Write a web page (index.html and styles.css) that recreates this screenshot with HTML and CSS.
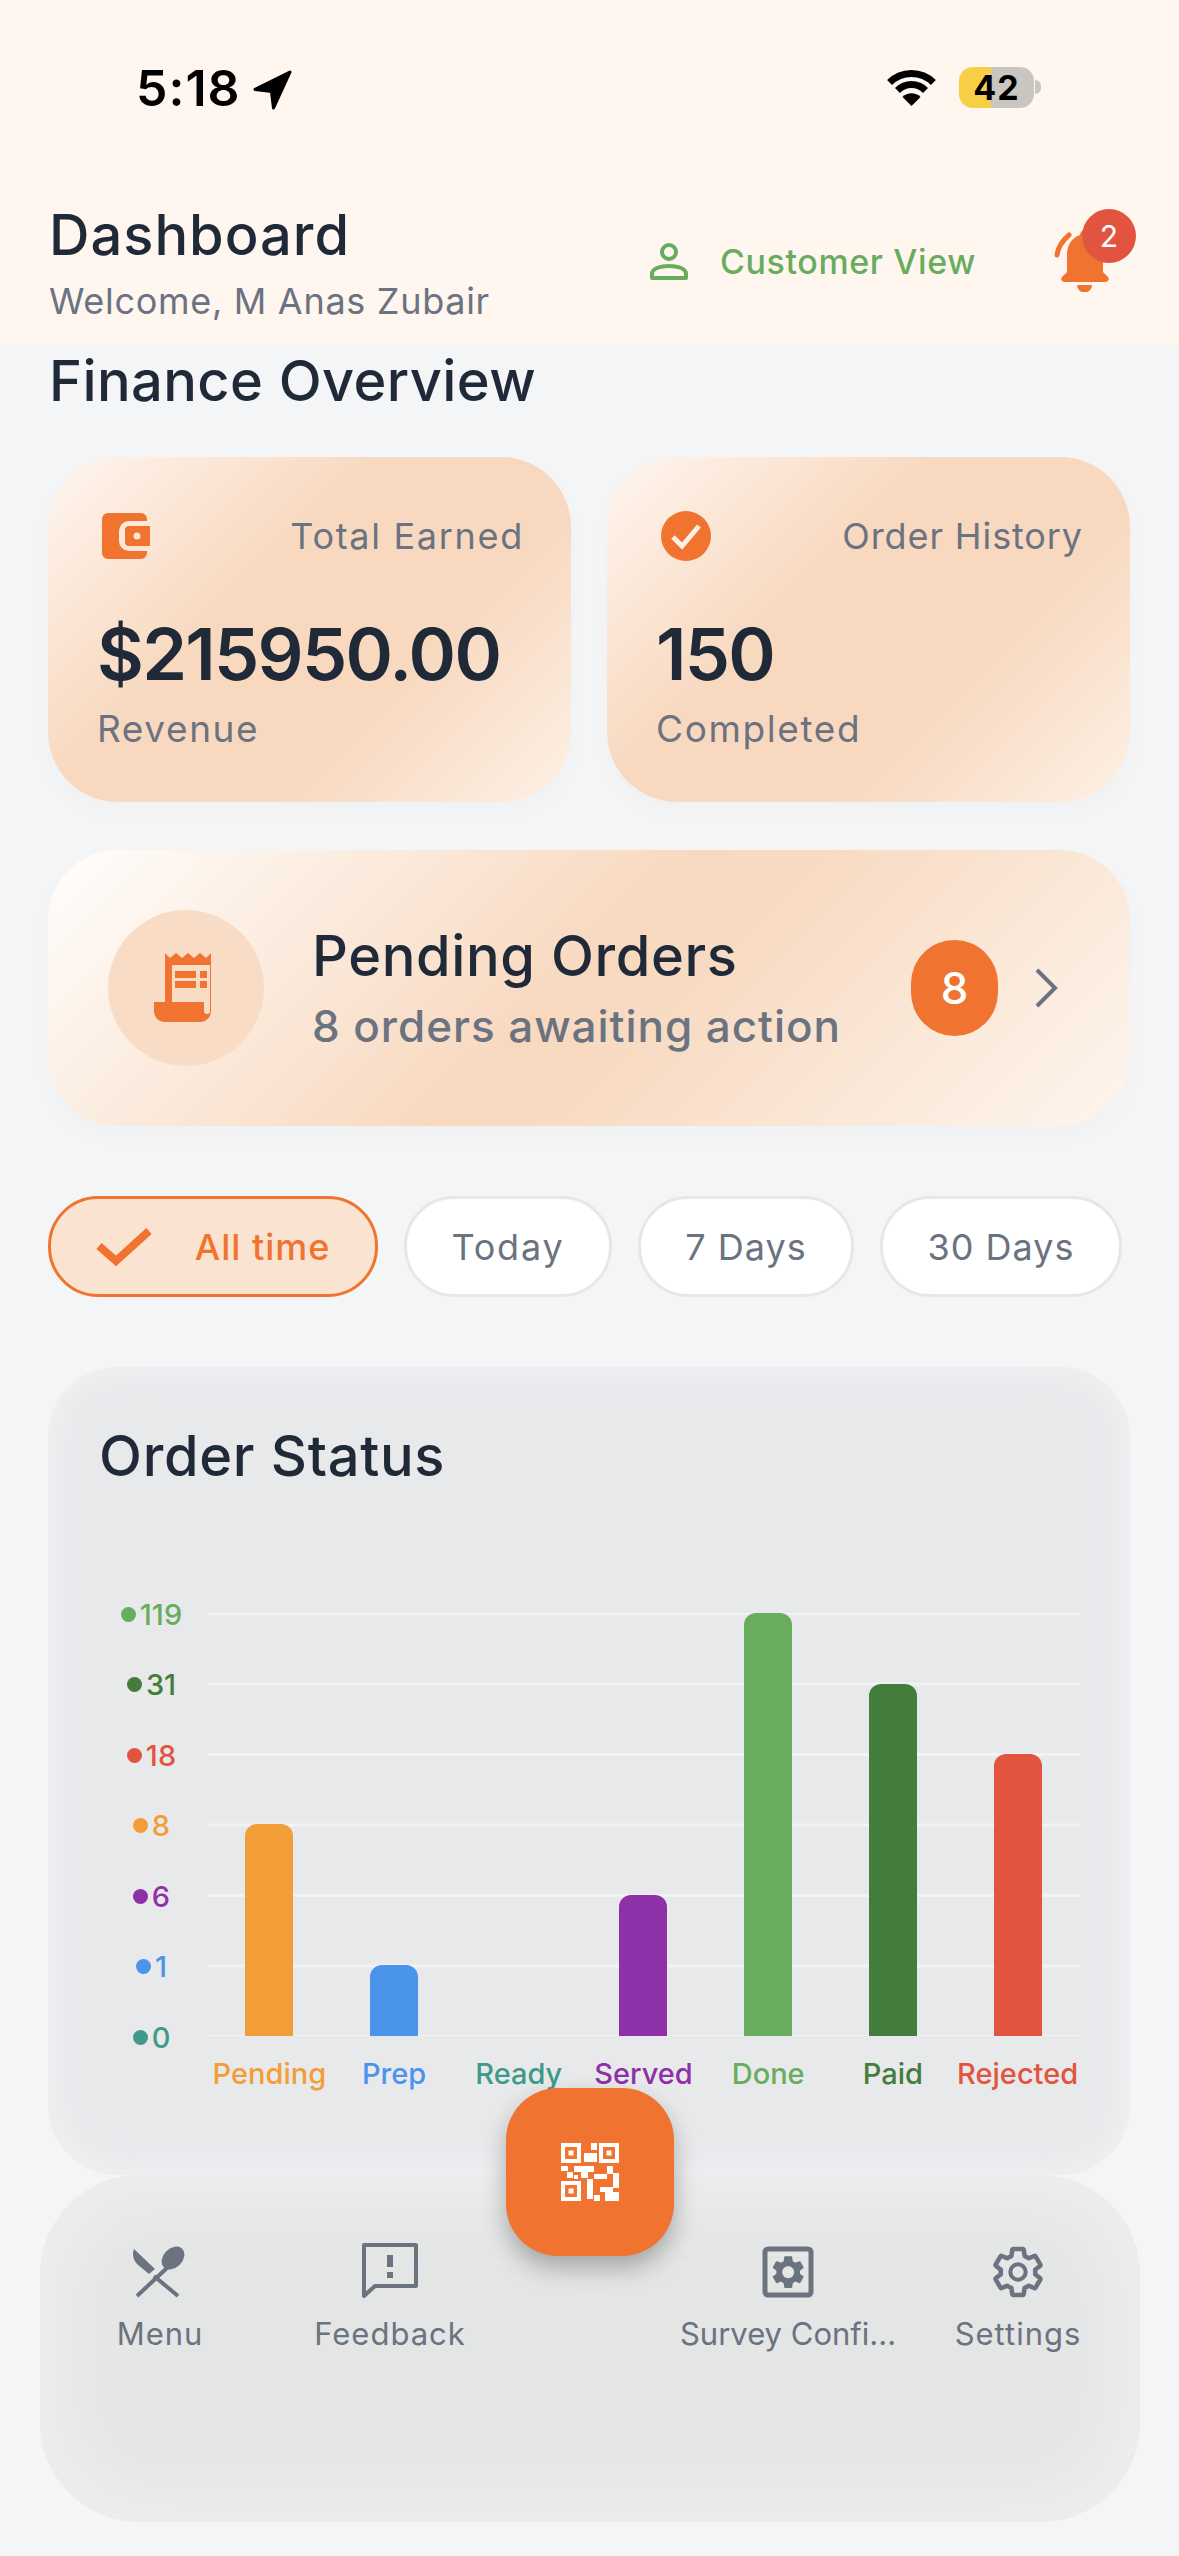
FILE: index.html
```html
<!DOCTYPE html>
<html lang="en">
<head>
  <meta charset="UTF-8">
  <meta name="viewport" content="width=device-width, initial-scale=1.0">
  <title>Dashboard</title>
  <link rel="stylesheet" href="styles.css">
</head>
<body>
  <!-- Top header with status bar -->
  <header class="top">
    <div class="status">
      <div class="status-left">
        <span class="time">5:18</span>
        <svg class="arrow" viewBox="0 0 40 40"><path d="M37 3 3 20l16 2 2 16z" fill="#000" stroke="#000" stroke-width="3" stroke-linejoin="round"/></svg>
      </div>
      <div class="status-right">
        <svg class="wifi" viewBox="0 0 51 37">
          <path d="M3.6 13.5a31 31 0 0 1 43.8 0M11.5 21.5a19.5 19.5 0 0 1 28 0" fill="none" stroke="#000" stroke-width="7"/>
          <path d="M25.5 37 16.5 28a12.7 12.7 0 0 1 18 0z"/>
        </svg>
        <div class="battery"><span class="battery-num">42</span></div>
        <span class="battery-nub"></span>
      </div>
    </div>
    <div class="head-row">
      <div class="head-titles">
        <h1>Dashboard</h1>
        <p>Welcome, M Anas Zubair</p>
      </div>
      <div class="customer">
        <svg class="person" viewBox="0 0 38 38"><circle cx="19" cy="9" r="7" fill="none" stroke="#68ad5d" stroke-width="4"/><path d="M2 35v-4c0-6 9-8 17-8s17 2 17 8v4z" fill="none" stroke="#68ad5d" stroke-width="4" stroke-linejoin="round"/></svg>
        <span>Customer View</span>
      </div>
      <div class="bell">
        <svg viewBox="0 0 60 64">
          <path d="M33 2a5 5 0 0 0-5 5C19 10 15 18 15 27v17l-5 5a3 3 0 0 0 2 5h42a3 3 0 0 0 2-5l-5-5V27C51 18 47 10 38 7a5 5 0 0 0-5-5z" fill="#f0742f"/>
          <path d="M25 57h15a7.500 7.500 0 0 1-15 0z" fill="#f0742f"/>
          <path d="M17 7C10 13 6 19 5 27" fill="none" stroke="#f0742f" stroke-width="5" stroke-linecap="round"/>
        </svg>
        <span class="bell-badge">2</span>
      </div>
    </div>
  </header>

  <main class="content">
    <h2 class="finance-title">Finance Overview</h2>

    <section class="stat-row">
      <div class="stat-card">
        <div class="stat-top">
          <svg class="stat-icon wallet" viewBox="0 0 48 46">
            <path d="M6 0h33a6 6 0 0 1 6 6v2H27a10 10 0 0 0-10 10v10a10 10 0 0 0 10 10h18v2a6 6 0 0 1-6 6H6a6 6 0 0 1-6-6V6a6 6 0 0 1 6-6z" fill="#f0742f"/>
            <path fill-rule="evenodd" d="M27 13h21v20H27a4 4 0 0 1-4-4V17a4 4 0 0 1 4-4zm8 6.500a3.500 3.500 0 1 0 0 7 3.500 3.500 0 0 0 0-7z" fill="#f0742f"/>
          </svg>
          <span>Total Earned</span>
        </div>
        <div class="stat-value">$215950.00</div>
        <div class="stat-note">Revenue</div>
      </div>
      <div class="stat-card">
        <div class="stat-top stat-top-tight">
          <svg class="stat-icon" viewBox="0 0 50 50">
            <circle cx="25" cy="25" r="25" fill="#f0742f"/>
            <path d="M12 26l9 9 17-20" fill="none" stroke="#fdeee3" stroke-width="5"/>
          </svg>
          <span>Order History</span>
        </div>
        <div class="stat-value">150</div>
        <div class="stat-note">Completed</div>
      </div>
    </section>

    <section class="pending">
      <div class="pending-circle">
        <svg viewBox="0 0 64 70">
          <path fill-rule="evenodd" fill="#f0742f" d="M11 0l5 5 6-5 6 5 6-5 6 5 6-5 6 5 5-5v58a11 11 0 0 1-11 11H11A11 11 0 0 1 0 58V49h11zM18 12v37h32v9a3 3 0 0 0 6 0V12z"/>
          <path fill="#f0742f" d="M21 18h21v7H21zM46 18h7v7h-7zM21 28h21v7H21zM46 28h7v7h-7z"/>
        </svg>
      </div>
      <div class="pending-text">
        <div class="pending-title">Pending Orders</div>
        <div class="pending-sub">8 orders awaiting action</div>
      </div>
      <div class="pending-badge">8</div>
      <svg class="chevron" viewBox="0 0 24 40"><path d="M3 2l18 18L3 38" fill="none" stroke="#6b7280" stroke-width="4"/></svg>
    </section>

    <section class="chips">
      <div class="chip chip-active">
        <svg viewBox="0 0 56 40"><path d="M3 19l17 15L53 4" fill="none" stroke="#f0742f" stroke-width="8"/></svg>
        <span>All time</span>
      </div>
      <div class="chip chip-today">Today</div>
      <div class="chip chip-seven">7 Days</div>
      <div class="chip chip-thirty">30 Days</div>
    </section>

    <section class="chart-card">
      <h2>Order Status</h2>
      <div class="chart">
        <div class="axis">
          <div class="tick c-done"><i></i>119</div>
          <div class="tick c-paid"><i></i>31</div>
          <div class="tick c-rejected"><i></i>18</div>
          <div class="tick c-pending"><i></i>8</div>
          <div class="tick c-served"><i></i>6</div>
          <div class="tick c-prep"><i></i>1</div>
          <div class="tick c-ready"><i></i>0</div>
        </div>
        <div class="plot-wrap">
          <div class="plot">
            <div class="bar c-pending" style="height: 212px"></div>
            <div class="bar c-prep" style="height: 71px"></div>
            <div class="bar c-ready" style="height: 0"></div>
            <div class="bar c-served" style="height: 141px"></div>
            <div class="bar c-done" style="height: 423px"></div>
            <div class="bar c-paid" style="height: 352px"></div>
            <div class="bar c-rejected" style="height: 282px"></div>
          </div>
          <div class="bar-labels">
            <span class="c-pending">Pending</span>
            <span class="c-prep">Prep</span>
            <span class="c-ready">Ready</span>
            <span class="c-served">Served</span>
            <span class="c-done">Done</span>
            <span class="c-paid">Paid</span>
            <span class="c-rejected">Rejected</span>
          </div>
        </div>
      </div>
    </section>

    <nav class="bottom-nav">
      <div class="nav-item">
        <svg viewBox="0 0 56 58">
          <path d="M2 6l21 20-6 5L5 21C1 17 0 10 2 6z" fill="#6b7280"/>
          <ellipse cx="41" cy="15" rx="13" ry="9.500" transform="rotate(-45 41 15)" fill="#6b7280"/>
          <path d="M36 24 5 53M22 33l24 20" fill="none" stroke="#6b7280" stroke-width="4"/>
        </svg>
        <span>Menu</span>
      </div>
      <div class="nav-item">
        <svg viewBox="0 0 56 58">
          <path d="M2 2h52v41H13L2 53z" fill="none" stroke="#6b7280" stroke-width="4" stroke-linejoin="round"/>
          <path d="M25 12h6v12h-6zM25 29h6v6h-6z" fill="#6b7280"/>
        </svg>
        <span>Feedback</span>
      </div>
      <div class="nav-gap"></div>
      <div class="nav-item nav-item-tight">
        <svg viewBox="0 0 56 58">
          <rect x="5" y="6" width="46" height="46" rx="3" fill="none" stroke="#6b7280" stroke-width="5"/>
          <path transform="translate(8.400 9.400) scale(1.650)" fill="#6b7280" d="M19.140 12.940c.04-.3.06-.61.06-.94 0-.32-.02-.64-.07-.94l2.030-1.580c.18-.14.23-.41.12-.61l-1.920-3.320c-.12-.22-.37-.29-.59-.22l-2.390.96c-.5-.38-1.030-.7-1.620-.94l-.36-2.540c-.04-.24-.24-.41-.48-.41h-3.840c-.24 0-.43.17-.47.41l-.36 2.540c-.59.24-1.130.57-1.620.94l-2.390-.96c-.22-.08-.47 0-.59.22L2.740 8.870c-.12.21-.08.47.12.61l2.030 1.580c-.05.3-.09.63-.09.94s.02.64.07.94l-2.030 1.580c-.18.14-.23.41-.12.61l1.920 3.320c.12.22.37.29.59.22l2.390-.96c.5.38 1.030.7 1.620.94l.36 2.540c.05.24.24.41.48.41h3.840c.24 0 .44-.17.47-.41l.36-2.540c.59-.24 1.130-.56 1.620-.94l2.390.96c.22.08.47 0 .59-.22l1.920-3.320c.12-.22.07-.47-.12-.61l-2.010-1.580zM12 15.600c-1.980 0-3.600-1.620-3.600-3.600s1.620-3.600 3.600-3.600 3.600 1.620 3.600 3.600-1.620 3.600-3.600 3.600z"/>
        </svg>
        <span>Survey Confi...</span>
      </div>
      <div class="nav-item">
        <svg viewBox="0 0 56 58">
          <g transform="translate(-.800 .200) scale(2.400)">
            <path fill="none" stroke="#6b7280" stroke-width="1.900" stroke-linejoin="round" d="M19.140 12.940c.04-.3.06-.61.06-.94 0-.32-.02-.64-.07-.94l2.030-1.580c.18-.14.23-.41.12-.61l-1.920-3.320c-.12-.22-.37-.29-.59-.22l-2.390.96c-.5-.38-1.030-.7-1.620-.94l-.36-2.540c-.04-.24-.24-.41-.48-.41h-3.840c-.24 0-.43.17-.47.41l-.36 2.540c-.59.24-1.130.57-1.620.94l-2.390-.96c-.22-.08-.47 0-.59.22L2.740 8.870c-.12.21-.08.47.12.61l2.030 1.580c-.05.3-.09.63-.09.94s.02.64.07.94l-2.030 1.580c-.18.14-.23.41-.12.61l1.920 3.320c.12.22.37.29.59.22l2.390-.96c.5.38 1.030.7 1.620.94l.36 2.540c.05.24.24.41.48.41h3.840c.24 0 .44-.17.47-.41l.36-2.540c.59-.24 1.130-.56 1.620-.94l2.390.96c.22.08.47 0 .59-.22l1.920-3.320c.12-.22.07-.47-.12-.61l-2.010-1.580z"/>
            <circle cx="12" cy="12" r="3.200" fill="none" stroke="#6b7280" stroke-width="1.700"/>
          </g>
        </svg>
        <span>Settings</span>
      </div>
    </nav>
  </main>

  <!-- QR button sits over the chart and the nav -->
  <div class="qr-button">
    <svg viewBox="0 0 58 58" fill="#fff">
      <path fill-rule="evenodd" d="M0 0h20v20H0zM4 4v12h12V4zM7.500 7.500h5v5h-5zM38 0h20v20H38zM42 4v12h12V4zM45.500 7.500h5v5h-5zM0 38h20v20H0zM4 42v12h12V42zM7.500 45.500h5v5h-5z"/>
      <path d="M30 0h6v7h-6zM23 10h13v9H23zM0 23h7v5H0zM6 29h6v6H6zM13 23h20v6H13zM20 29h7v6h-7zM33 31h13v5H33zM46 23h6v8h-6zM52 30h6v15h-6zM26 36h6v20h-6zM33 52h6v6h-6zM39 44h13v5H39zM44 49h14v9H44zM13 32h4v4h-4z"/>
    </svg>
  </div>
</body>
</html>
```

FILE: styles.css
```css
/* General */
* {
  box-sizing: border-box;
}

html, body {
  margin: 0;
  padding: 0;
}

body {
  position: relative;
  width: 1179px;
  height: 2556px;
  overflow: hidden;
  background-color: #f3f5f7;
  font-family: Inter, "Noto Sans", sans-serif;
  color: #1f2937;
}

h1, h2, p {
  margin: 0;
  font-weight: 500;
}

svg {
  display: block;
  flex-shrink: 0;
}

/* Header */
.top {
  height: 345px;
  background-color: #fff6f0;
}

.status {
  display: flex;
  justify-content: space-between;
  height: 178px;
  padding: 64px 138px 0 136px;
}

.status-left {
  display: flex;
  align-items: flex-start;
  gap: 11px;
}

.time {
  font-size: 50px;
  line-height: 48px;
  font-weight: 600;
  color: #000;
  letter-spacing: 1px;
}

.arrow {
  width: 41px;
  height: 41px;
  margin-top: 5px;
}

.status-right {
  display: flex;
  align-items: flex-start;
  padding-top: 3px;
}

.wifi {
  width: 51px;
  height: 37px;
  margin-top: 2px;
  margin-right: 22px;
}

.battery {
  width: 75px;
  height: 41px;
  border-radius: 14px;
  background: linear-gradient(90deg, #f7cf45 0 32px, #c9c5bf 32px);
  text-align: center;
}

.battery-num {
  font-size: 34px;
  line-height: 41px;
  font-weight: 700;
  color: #000;
  letter-spacing: 1px;
}

.battery-nub {
  width: 6px;
  height: 14px;
  margin: 13px 0 0 1px;
  border-radius: 0 7px 7px 0;
  background-color: #c9c5bf;
}

.head-row {
  display: flex;
  align-items: flex-start;
  padding-left: 49px;
}

.head-titles {
  width: 601px;
  padding-top: 23px;
}

.head-titles h1 {
  font-size: 56px;
  line-height: 68px;
  letter-spacing: 1px;
}

.head-titles p {
  margin-top: 8px;
  font-size: 36px;
  line-height: 48px;
  font-weight: 400;
  color: #6b7280;
  letter-spacing: 0.7px;
}

.customer {
  display: flex;
  align-items: center;
  gap: 32px;
  width: 402px;
  margin-top: 64px;
  font-size: 34px;
  line-height: 40px;
  font-weight: 500;
  color: #68ad5d;
  letter-spacing: 0.6px;
}

.person {
  width: 38px;
  height: 38px;
}

.bell {
  position: relative;
  width: 60px;
  height: 64px;
  margin-top: 50px;
}

.bell svg {
  width: 60px;
  height: 64px;
}

.bell-badge {
  position: absolute;
  top: -19px;
  left: 30px;
  width: 54px;
  height: 54px;
  border-radius: 50%;
  background-color: #e2543f;
  color: #fff;
  font-size: 30px;
  line-height: 54px;
  text-align: center;
}

/* Content */
.content {
  padding: 0 49px 0 48px;
}

.finance-title {
  height: 72px;
  margin-bottom: 40px;
  font-size: 56px;
  line-height: 72px;
  padding-left: 1px;
  letter-spacing: 0.4px;
}

.stat-row {
  display: flex;
  gap: 36px;
  margin-bottom: 48px;
}

.stat-card {
  width: 523px;
  height: 345px;
  padding: 48px 47px 0 49px;
  border-radius: 70px;
  background: linear-gradient(135deg, #fff6f0 0%, #f8d9c0 38%, #f8d9c0 66%, #fdf1e6 100%);
  box-shadow: 0 10px 24px rgba(0, 0, 0, 0.02);
}

.stat-top {
  display: flex;
  justify-content: space-between;
  align-items: center;
  height: 62px;
  font-size: 36px;
  letter-spacing: 1.7px;
  color: #6b7280;
}

.stat-top-tight {
  letter-spacing: 0.9px;
}

.stat-icon {
  width: 50px;
  height: 50px;
  margin-left: 5px;
}

.wallet {
  width: 48px;
  height: 46px;
}

.stat-value {
  margin-top: 44px;
  font-size: 72px;
  line-height: 86px;
  font-weight: 600;
  letter-spacing: -1.7px;
}

.stat-note {
  margin-top: 9px;
  font-size: 37px;
  line-height: 46px;
  color: #6b7280;
  letter-spacing: 1.6px;
}

.pending {
  display: flex;
  align-items: center;
  height: 276px;
  margin-bottom: 70px;
  padding-left: 60px;
  border-radius: 70px;
  background: linear-gradient(135deg, #fffefd 0%, #f8d9c0 48%, #f8dbc3 58%, #fdf3ea 95%);
  box-shadow: 0 10px 24px rgba(0, 0, 0, 0.02);
}

.pending-circle {
  display: flex;
  align-items: center;
  justify-content: center;
  width: 156px;
  height: 156px;
  border-radius: 50%;
  background-color: #f8dcc5;
}

.pending-circle svg {
  width: 64px;
  height: 70px;
}

.pending-text {
  width: 599px;
  margin-left: 48px;
}

.pending-title {
  font-size: 56px;
  line-height: 66px;
  font-weight: 500;
  letter-spacing: 0.6px;
}

.pending-sub {
  margin-top: 9px;
  font-size: 44px;
  line-height: 56px;
  font-weight: 500;
  color: #6b7280;
  letter-spacing: 0.95px;
}

.pending-badge {
  width: 87px;
  height: 96px;
  border-radius: 48px;
  background-color: #f0742f;
  color: #fff;
  font-size: 44px;
  line-height: 96px;
  font-weight: 500;
  text-align: center;
}

.chevron {
  width: 24px;
  height: 40px;
  margin-left: 36px;
}

.chips {
  display: flex;
  gap: 26px;
  height: 101px;
  margin-bottom: 70px;
}

.chip {
  display: flex;
  align-items: center;
  justify-content: center;
  height: 101px;
  border: 3px solid #e5e7e9;
  border-radius: 50px;
  background-color: #fff;
  font-size: 36px;
  color: #6b7280;
  letter-spacing: 1px;
}

.chip-active {
  gap: 43px;
  width: 330px;
  border-color: #f0742f;
  background-color: #fbe3d2;
  color: #f0742f;
  font-weight: 500;
}

.chip-active svg {
  width: 56px;
  height: 40px;
}

.chip-today {
  width: 208px;
  letter-spacing: 1.8px;
}

.chip-seven {
  width: 216px;
}

.chip-thirty {
  width: 242px;
}

/* Chart */
.chart-card {
  width: 1082px;
  height: 808px;
  padding: 59px 50px 0 51px;
  border-radius: 70px;
  background-color: #e8e9eb;
  box-shadow: inset 0 0 32px 8px #f0f1f3;
}

.chart-card h2 {
  height: 60px;
  font-size: 56px;
  line-height: 60px;
  letter-spacing: 0.7px;
}

.chart {
  display: flex;
  margin-top: 92px;
}

.axis {
  width: 105px;
  margin-right: 3px;
}

.tick {
  display: flex;
  align-items: center;
  justify-content: center;
  gap: 4px;
  height: 70.5px;
  padding-top: 2px;
  font-size: 29px;
  font-weight: 500;
}

.tick i {
  width: 15px;
  height: 15px;
  border-radius: 50%;
  background-color: currentColor;
}

.plot-wrap {
  width: 873px;
  padding-top: 35px;
}

.plot {
  display: grid;
  grid-template-columns: repeat(7, 1fr);
  align-items: end;
  justify-items: center;
  height: 423px;
  background: linear-gradient(#f2f3f4 3px, transparent 3px) 0 -1px / 100% 70.5px;
}

.bar {
  width: 48px;
  border-radius: 12px 12px 0 0;
  background-color: currentColor;
}

.bar-labels {
  display: grid;
  grid-template-columns: repeat(7, 1fr);
  margin-top: 18px;
  font-size: 29px;
  line-height: 40px;
  font-weight: 500;
  text-align: center;
}

.c-pending { color: #f29d38; }
.c-prep { color: #4a94ec; }
.c-ready { color: #3f9a8a; }
.c-served { color: #8e30a8; }
.c-done { color: #68ad5d; }
.c-paid { color: #447c3b; }
.c-rejected { color: #e2543f; }

/* Bottom nav */
.bottom-nav {
  display: grid;
  grid-template-columns: 240px 220px 180px 216px 244px;
  width: 1100px;
  height: 347px;
  margin-left: -8px;
  padding-top: 68px;
  border-radius: 100px;
  background-color: #e4e5e5;
  box-shadow: inset 0 0 80px 24px #eeeff1;
}

.nav-item {
  display: flex;
  flex-direction: column;
  align-items: center;
  gap: 13px;
  font-size: 31px;
  line-height: 40px;
  color: #6b7280;
  letter-spacing: 1px;
  white-space: nowrap;
}

.nav-item-tight {
  letter-spacing: 0;
}

.nav-item svg {
  width: 56px;
  height: 58px;
}

.qr-button {
  position: absolute;
  top: 2088px;
  left: 506px;
  display: flex;
  align-items: center;
  justify-content: center;
  width: 168px;
  height: 168px;
  border-radius: 52px;
  background-color: #f0742f;
  box-shadow: 0 12px 24px rgba(0, 0, 0, 0.28);
}

.qr-button svg {
  width: 58px;
  height: 58px;
}
```
